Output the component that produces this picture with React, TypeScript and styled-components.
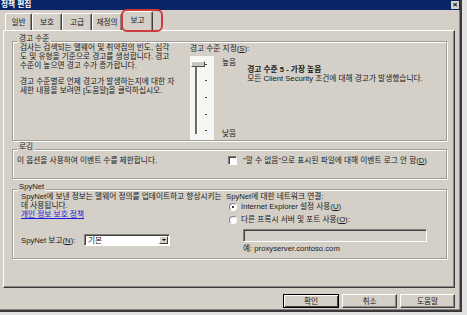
import styled, { createGlobalStyle } from "styled-components";

const GlobalStyle = createGlobalStyle`
   html, body {
      margin: 0;
      padding: 0;
      background: #e2e2e2;
   }
   body {
      font-family: "Liberation Sans", "Noto Sans CJK KR", sans-serif;
      font-size: 7.7px;
      line-height: 9px;
      color: #1a1a1a;
   }
`;

const Window = styled.div`
   width: 462px;
   height: 312px;
   box-sizing: border-box;
   background: #d4d0c8;
   border-right: 2px solid #3a3a3a;
   border-bottom: 2px solid #3a3a3a;
   box-shadow: inset -1px -1px 0 #8a8782;
   display: flex;
   flex-direction: column;
`;

const TitleBar = styled.div`
   height: 10px;
   background: #0b2668;
   color: #fff;
   font-weight: bold;
   display: flex;
   align-items: center;
   justify-content: space-between;
   padding-left: 1px;
   line-height: 10px;
`;

const CloseBox = styled.div`
   width: 8px;
   height: 8px;
   margin-right: 1px;
   background: #d4d0c8;
   color: #000;
   font-size: 8px;
   line-height: 8px;
   text-align: center;
   font-weight: bold;
`;

const Body = styled.div`
   flex: 1;
   display: flex;
   flex-direction: column;
   padding: 0 5px 0 3px;
`;

const TabStrip = styled.div`
   display: flex;
   align-items: flex-end;
   height: 20px;
   padding-left: 2px;
   position: relative;
   z-index: 1;
`;

const Tab = styled.div<{ $w: number; $active?: boolean }>`
   position: relative;
   width: ${(p) => p.$w}px;
   height: ${(p) => (p.$active ? 20 : 17)}px;
   box-sizing: border-box;
   display: flex;
   align-items: center;
   justify-content: center;
   border-top: 1px solid #fff;
   border-left: 1px solid #fff;
   border-right: 1px solid #404040;
   border-radius: 2px 2px 0 0;
   box-shadow: inset -1px 0 0 #8a8782;
   background: #d4d0c8;
   margin-bottom: ${(p) => (p.$active ? -1 : 0)}px;
   padding-bottom: ${(p) => (p.$active ? 2 : 0)}px;
`;

const Highlight = styled.div`
   position: absolute;
   left: -2px;
   top: -3px;
   width: 42px;
   height: 23px;
   box-sizing: border-box;
   border: 2px solid #cf3b3f;
   border-radius: 6px;
`;

const Panel = styled.div`
   height: 258px;
   box-sizing: border-box;
   border: 1px solid;
   border-color: #fff #3a3a3a #3a3a3a #fff;
   box-shadow: inset -1px -1px 0 #8a8782;
   padding: 3px 7px 0 8px;
   display: flex;
   flex-direction: column;
`;

const Group = styled.fieldset<{ $gap: number }>`
   margin: ${(p) => p.$gap}px 0 0;
   padding: 0;
   min-width: 0;
   border: 1px solid #a09d96;
   box-shadow: inset 1px 1px 0 #fff, 1px 1px 0 #fff;
`;

/* legend sits a little above the etched line, as in the classic dialog */
const Legend = styled.legend`
   margin-left: 4px;
   padding: 0 1px 5px;
   line-height: 9px;
`;

const LegendText = styled.span`
   display: inline-block;
   vertical-align: top;
   height: 9px;
   background: #d4d0c8;
   padding: 0 1px;
`;

const GroupBody = styled.div<{ $h: number; $pl: number }>`
   height: ${(p) => p.$h}px;
   margin-top: -5px;
   display: flex;
   padding-left: ${(p) => p.$pl}px;
`;

const TextColumn = styled.div<{ $w: number; $pt: number }>`
   width: ${(p) => p.$w}px;
   flex-shrink: 0;
   padding-top: ${(p) => p.$pt}px;
   white-space: nowrap;
   overflow: hidden;
`;

const Para = styled.p`
   margin: 0 0 7px;
`;

const SliderArea = styled.div`
   display: flex;
   flex-direction: column;
   padding-top: 1px;
`;

const SliderRow = styled.div`
   display: flex;
   margin-top: 3px;
`;

const SliderBox = styled.div`
   width: 24px;
   height: 84px;
   background: #f6f6f4;
   position: relative;
`;

const Track = styled.div`
   position: absolute;
   left: 5px;
   top: 7px;
   width: 2px;
   height: 71px;
   background: #6d6b67;
   border-right: 1px solid #fff;
`;

const Thumb = styled.div`
   position: absolute;
   left: 1px;
   top: 5px;
   width: 12px;
   height: 4px;
   background: #c9c6bf;
   border: 1px solid;
   border-color: #fff #505050 #505050 #fff;
`;

const Tick = styled.div`
   position: absolute;
   left: 15px;
   width: 2px;
   height: 1px;
   background: #444;
`;

const LevelLabels = styled.div`
   display: flex;
   flex-direction: column;
   justify-content: space-between;
   height: 80px;
   margin-left: 8px;
   padding-top: 2px;
`;

const Description = styled.div`
   margin-left: 11px;
   margin-top: 9px;
   white-space: nowrap;
`;

const Strong = styled.div`
   font-weight: bold;
`;

const Row = styled.div<{ $mt?: number }>`
   display: flex;
   align-items: center;
   margin-top: ${(p) => p.$mt ?? 0}px;
   white-space: nowrap;
`;

const CheckRow = styled(Row)`
   align-self: flex-start;
   padding-top: 5px;
`;

const CheckBox = styled.div`
   width: 9px;
   height: 9px;
   box-sizing: border-box;
   background: #fff;
   border: 1px solid;
   border-color: #808080 #fff #fff #808080;
   box-shadow: inset 1px 1px 0 #404040;
   margin-right: 6px;
`;

const Radio = styled.div<{ $on?: boolean }>`
   width: 8px;
   height: 8px;
   box-sizing: border-box;
   border-radius: 50%;
   background: #fff;
   border: 1px solid;
   border-color: #808080 #fff #fff #808080;
   margin: 0 4px 0 3px;
   display: flex;
   align-items: center;
   justify-content: center;
   &::after {
      content: "";
      width: 2px;
      height: 2px;
      border-radius: 50%;
      background: ${(p) => (p.$on ? "#000" : "transparent")};
   }
`;

const NetColumn = styled.div`
   display: flex;
   flex-direction: column;
   padding-top: 1px;
`;

const ProxyInput = styled.div`
   width: 184px;
   height: 13px;
   box-sizing: border-box;
   margin: 5px 0 0 17px;
   border: 1px solid;
   border-color: #808080 #fff #fff #808080;
   box-shadow: inset 1px 1px 0 #404040;
`;

const Example = styled.div`
   margin: 2px 0 0 17px;
`;

const Link = styled.a`
   color: #1a1ad8;
   text-decoration: underline;
   display: block;
`;

const ReportLabel = styled.span`
   width: 63px;
`;

const SelectBox = styled.div`
   width: 86px;
   height: 12px;
   box-sizing: border-box;
   background: #fff;
   border: 1px solid;
   border-color: #808080 #fff #fff #808080;
   box-shadow: inset 1px 1px 0 #404040;
   display: flex;
   align-items: center;
   justify-content: space-between;
   padding-left: 3px;
`;

const DropButton = styled.div`
   width: 9px;
   height: 8px;
   margin-right: 1px;
   box-sizing: border-box;
   background: #d4d0c8;
   border: 1px solid;
   border-color: #fff #404040 #404040 #fff;
   display: flex;
   align-items: center;
   justify-content: center;
   &::after {
      content: "";
      border-left: 2px solid transparent;
      border-right: 2px solid transparent;
      border-top: 2px solid #000;
   }
`;

const ButtonRow = styled.div`
   display: flex;
   justify-content: flex-end;
   gap: 3px;
   margin-top: 6px;
`;

const Button = styled.div<{ $default?: boolean }>`
   width: ${(p) => (p.$default ? 56 : 55)}px;
   height: 14px;
   box-sizing: border-box;
   display: flex;
   align-items: center;
   justify-content: center;
   background: #d4d0c8;
   border: 1px solid;
   border-color: ${(p) => (p.$default ? "#000" : "#fff #404040 #404040 #fff")};
   box-shadow: ${(p) =>
      p.$default
         ? "inset 1px 1px 0 #fff, inset -1px -1px 0 #404040"
         : "inset -1px -1px 0 #8a8782"};
`;

const U = styled.span`
   text-decoration: underline;
`;

const tabs = [
   { label: "일반", w: 27 },
   { label: "보호", w: 30 },
   { label: "고급", w: 30 },
   { label: "재정의", w: 30 },
   { label: "보고", w: 31, active: true },
];

const ticks = [8, 24, 41, 58, 74];

export default function App() {
   return (
      <>
         <GlobalStyle />
         <Window>
            <TitleBar>
               <span>정책 편집</span>
               <CloseBox>×</CloseBox>
            </TitleBar>
            <Body>
               <TabStrip>
                  {tabs.map((t) => (
                     <Tab key={t.label} $w={t.w} $active={t.active}>
                        {t.label}
                        {t.active && <Highlight />}
                     </Tab>
                  ))}
               </TabStrip>
               <Panel>
                  <Group $gap={0}>
                     <Legend>
                        <LegendText>경고 수준</LegendText>
                     </Legend>
                     <GroupBody $h={97} $pl={7}>
                        <TextColumn $w={170} $pt={0}>
                           <Para>
                              검사는 검색되는 맬웨어 및 취약점의 빈도, 심각
                              <br />도 및 유형을 기준으로 경고를 생성합니다. 경고
                              <br />수준이 높으면 경고 수가 증가합니다.
                           </Para>
                           <Para>
                              경고 수준별로 언제 경고가 발생하는지에 대한 자
                              <br />세한 내용을 보려면 [도움말]을 클릭하십시오.
                           </Para>
                        </TextColumn>
                        <SliderArea>
                           <div>
                              경고 수준 지정(<U>S</U>):
                           </div>
                           <SliderRow>
                              <SliderBox>
                                 <Track />
                                 {ticks.map((y) => (
                                    <Tick key={y} style={{ top: y }} />
                                 ))}
                                 <Thumb />
                              </SliderBox>
                              <LevelLabels>
                                 <span>높음</span>
                                 <span>낮음</span>
                              </LevelLabels>
                              <Description>
                                 <Strong>경고 수준 5 - 가장 높음</Strong>
                                 <div>모든 Client Security 조건에 대해 경고가 발생했습니다.</div>
                              </Description>
                           </SliderRow>
                        </SliderArea>
                     </GroupBody>
                  </Group>

                  <Group $gap={1}>
                     <Legend>
                        <LegendText>로깅</LegendText>
                     </Legend>
                     <GroupBody $h={27} $pl={4}>
                        <TextColumn $w={211} $pt={5}>
                           이 옵션을 사용하여 이벤트 수를 제한합니다.
                        </TextColumn>
                        <CheckRow>
                           <CheckBox />
                           "알 수 없음"으로 표시된 파일에 대해 이벤트 로그 안 함(<U>D</U>)
                        </CheckRow>
                     </GroupBody>
                  </Group>

                  <Group $gap={3}>
                     <Legend>
                        <LegendText>SpyNet</LegendText>
                     </Legend>
                     <GroupBody $h={67} $pl={8}>
                        <TextColumn $w={205} $pt={1}>
                           SpyNet에 보낸 정보는 맬웨어 정의를 업데이트하고 향상시키는
                           <br />데 사용됩니다.
                           <Link href="#">개인 정보 보호 정책</Link>
                           <Row $mt={15}>
                              <ReportLabel>
                                 SpyNet 보고(<U>N</U>):
                              </ReportLabel>
                              <SelectBox>
                                 기본
                                 <DropButton />
                              </SelectBox>
                           </Row>
                        </TextColumn>
                        <NetColumn>
                           <div>SpyNet에 대한 네트워크 연결:</div>
                           <Row $mt={1}>
                              <Radio $on />
                              Internet Explorer 설정 사용(<U>U</U>)
                           </Row>
                           <Row $mt={4}>
                              <Radio />
                              다른 프록시 서버 및 포트 사용(<U>O</U>):
                           </Row>
                           <ProxyInput />
                           <Example>예: proxyserver.contoso.com</Example>
                        </NetColumn>
                     </GroupBody>
                  </Group>
               </Panel>
               <ButtonRow>
                  <Button $default>확인</Button>
                  <Button>취소</Button>
                  <Button>도움말</Button>
               </ButtonRow>
            </Body>
         </Window>
      </>
   );
}
